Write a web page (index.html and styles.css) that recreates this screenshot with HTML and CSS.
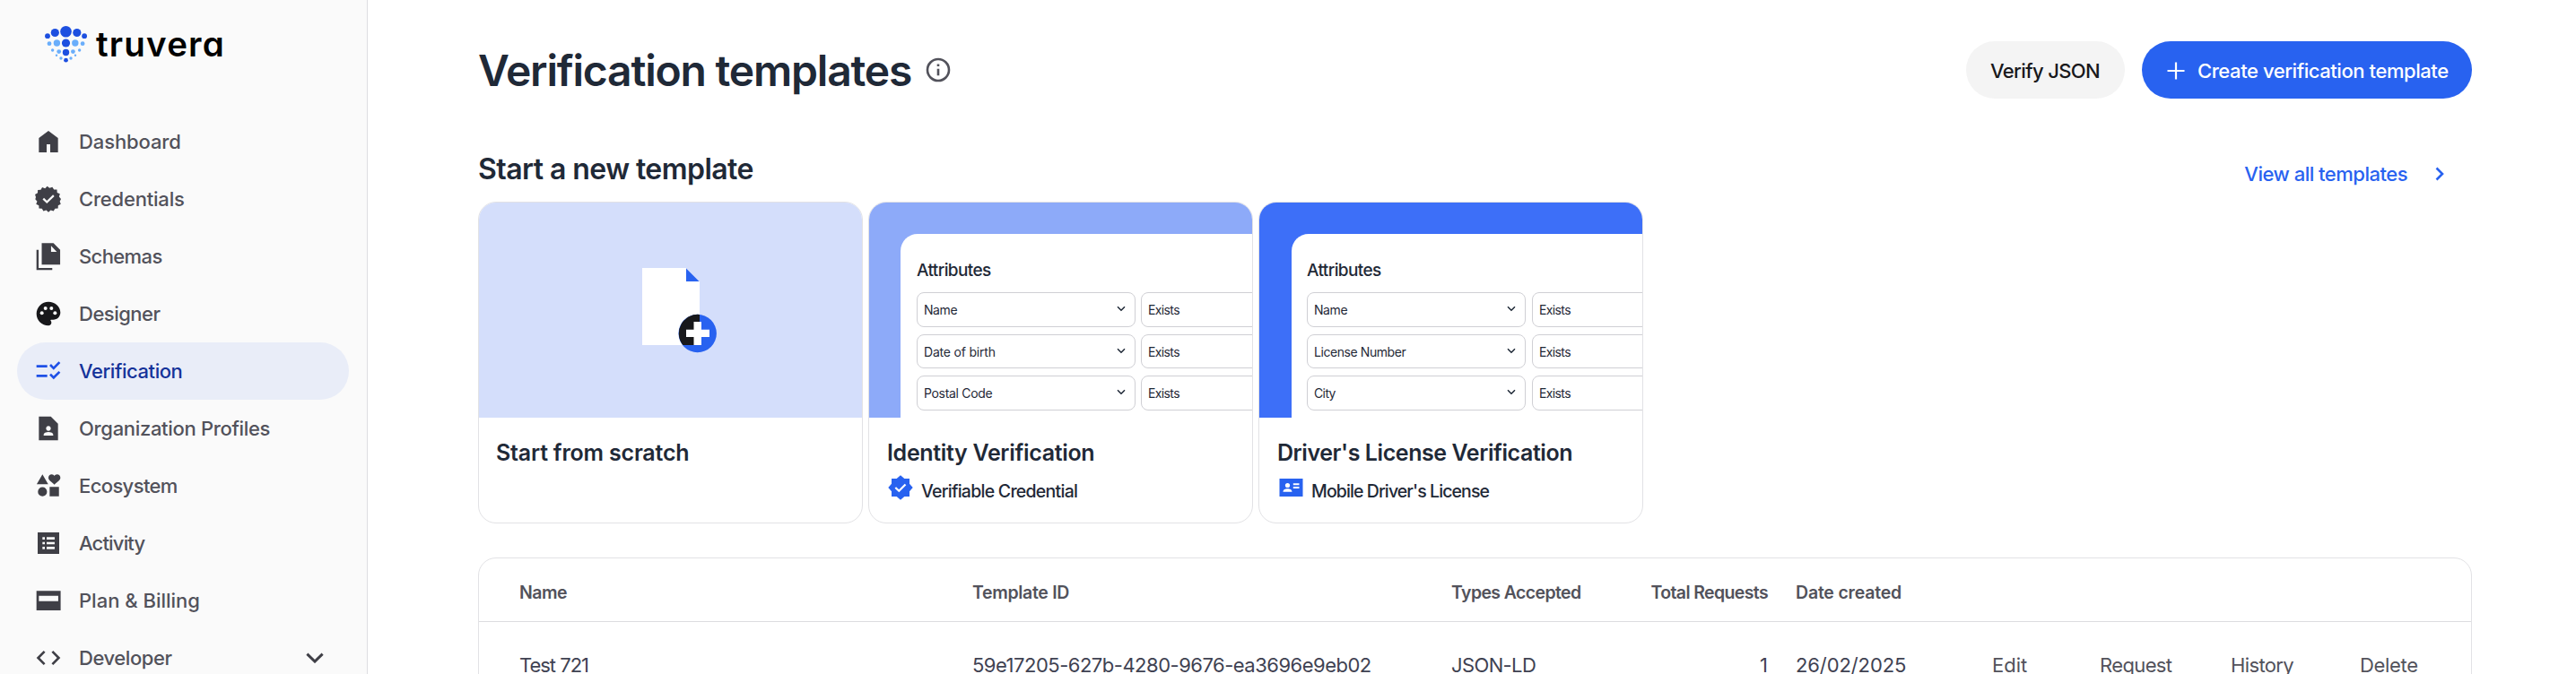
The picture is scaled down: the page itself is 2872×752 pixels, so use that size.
FILE: index.html
```html
<!DOCTYPE html>
<html lang="en">
<head>
<meta charset="utf-8">
<title>Verification templates</title>
<link rel="stylesheet" href="styles.css">
</head>
<body>
<aside class="sidebar">
  <div class="logo">
    <svg width="48" height="44" viewBox="50 28 48 44">
      <g fill="#1d4fe0"><circle cx="73.5" cy="35.3" r="6.3"/><circle cx="61.3" cy="36.5" r="4.6"/><circle cx="85.8" cy="36.5" r="4.6"/><circle cx="53" cy="40.2" r="2.9"/><circle cx="94.1" cy="40.2" r="2.9"/><circle cx="73.5" cy="48" r="4.6"/><circle cx="73.5" cy="58.5" r="3.7"/><circle cx="73.5" cy="67.2" r="2.4"/></g>
      <g fill="#6aaefb"><circle cx="63.4" cy="48" r="3.7"/><circle cx="83.8" cy="48" r="3.7"/><circle cx="55" cy="48.7" r="2.4"/><circle cx="92.1" cy="48.7" r="2.4"/><circle cx="65.7" cy="57.6" r="2.4"/><circle cx="81.4" cy="57.6" r="2.4"/><circle cx="58.6" cy="56" r="1.7"/><circle cx="88.6" cy="56" r="1.7"/><circle cx="63" cy="61.7" r="1.2"/><circle cx="84" cy="61.7" r="1.2"/><circle cx="68" cy="65" r="1.7"/><circle cx="79" cy="65" r="1.7"/></g>
    </svg>
    <span class="wordmark">truvera</span>
  </div>
  <nav class="nav">
    <a class="item"><svg class="ic" viewBox="0 0 24 24"><path d="M4 21V9l8-6 8 6v12h-6.5v-6.8h-3V21z"/></svg><span class="ls1">Dashboard</span></a>
    <a class="item"><svg class="ic" viewBox="0 0 24 24"><path d="M22.5 12l-1.6-1.9.7-2.4-2.3-1 -.2-2.5-2.5 0-1.3-2.2-2.4.9L11 1.4 9.2 3.100l-2.400-.9-1.200 2.200-2.500.1-.1 2.500-2.200 1.200.7 2.300L1 12.100l1.600 1.900-.9 2.300 2.300 1.100.1 2.500 2.500.1 1.200 2.200 2.400-.8 1.800 1.700 1.900-1.700 2.400.8 1.200-2.200 2.500-.1.100-2.500 2.200-1.100-.8-2.300z"/><path class="cut" d="M7.700 11.700l3 2.900 5.700-5.500"/></svg><span class="ls2">Credentials</span></a>
    <a class="item"><svg class="ic" viewBox="0 0 24 24"><path fill-rule="evenodd" d="M16.200 1H6.400v17.900h15.400V6.600zM14.200 3.200v5h4.800z"/><path d="M2 6.500v17h13.200v-1.800H3.800V6.500z"/></svg><span class="ls6">Schemas</span></a>
    <a class="item"><svg class="ic ink" viewBox="0 0 24 24"><path fill-rule="evenodd" d="M12 2C6.490 2 2 6.490 2 12s4.490 10 10 10c1.380 0 2.500-1.120 2.500-2.500 0-.61-.23-1.200-.64-1.670-.08-.1-.13-.21-.13-.33 0-.28.22-.5.5-.5H16c3.310 0 6-2.690 6-6C22 6.040 17.510 2 12 2z"/><g fill="#fafafa"><circle cx="6.500" cy="11.500" r="1.500"/><circle cx="9.500" cy="7.500" r="1.500"/><circle cx="14.500" cy="7.500" r="1.500"/><circle cx="17.500" cy="11.500" r="1.500"/></g></svg><span class="ls5">Designer</span></a>
    <a class="item active"><svg class="ic" viewBox="0 0 24 24"><path d="M11 7H2v2h9V7zm0 8H2v2h9v-2zm5.340-4L12.800 7.460l1.410-1.410 2.120 2.120 4.240-4.240L22 5.340 16.340 11zm0 8l-3.540-3.540 1.410-1.410 2.120 2.120 4.240-4.240L22 13.340 16.340 19z"/></svg><span class="ls4">Verification</span></a>
    <a class="item"><svg class="ic" viewBox="0 0 24 24"><path d="M14 2H4v20h16V8l-6-6zm-2 8c1.100 0 2 .9 2 2s-.9 2-2 2-2-.9-2-2 .9-2 2-2zm4 8H8v-.57c0-.81.48-1.530 1.220-1.850.85-.37 1.790-.58 2.780-.58s1.930.21 2.780.58c.74.32 1.220 1.040 1.220 1.850V18z"/></svg><span class="ls3">Organization Profiles</span></a>
    <a class="item"><svg class="ic" viewBox="0 0 24 24"><path d="M7 13.200a3.800 3.800 0 1 0 0 7.600 3.800 3.800 0 0 0 0-7.600zM13 13v7.800h7.800V13zM7 2.500l-4.800 8.200h9.600zM19.250 2.500c-1.060 0-1.810.56-2.250 1.170-.44-.61-1.190-1.170-2.250-1.170C13.190 2.500 12 3.780 12 5.250c0 2 2.420 3.420 5 5.750 2.580-2.330 5-3.750 5-5.750 0-1.470-1.190-2.750-2.750-2.750z"/></svg><span class="ls6">Ecosystem</span></a>
    <a class="item"><svg class="ic" viewBox="0 0 24 24"><path fill-rule="evenodd" d="M3 3h18v18H3zM7 7v2h2V7zM10.500 7v2h6.700V7zM7 11v2h2v-2zM10.500 11v2h6.700v-2zM7 15v2h2v-2zM10.500 15v2h6.700v-2z"/></svg><span class="ls8">Activity</span></a>
    <a class="item"><svg class="ic" viewBox="0 0 24 24"><path fill-rule="evenodd" d="M2 3.900h20.200v16.300H2zM4 8v4.600h16.200V8z"/></svg><span>Plan &amp; Billing</span></a>
    <a class="item"><svg class="ic" viewBox="0 0 24 24"><path d="M9.400 16.600L4.800 12l4.600-4.600L8 6l-6 6 6 6 1.400-1.400zm5.200 0l4.600-4.600-4.600-4.600L16 6l6 6-6 6-1.400-1.400z"/></svg><span class="ls4">Developer</span><svg class="expand" width="20" height="12" viewBox="0 0 20 12"><path d="M1.400 1.600L10 10l8.600-8.400"/></svg></a>
  </nav>
</aside>

<main class="main">
  <header class="head">
    <h1>Verification templates</h1>
    <svg class="info" width="32" height="32" viewBox="0 0 32 32"><circle cx="16" cy="16" r="12"/><path d="M16 14.800v7.400M16 9.600v2.400"/></svg>
    <div class="actions">
      <button class="btn ghost"><span class="ls6">Verify JSON</span></button>
      <button class="btn primary"><svg width="20" height="20" viewBox="0 0 20 20"><path d="M10 .5v19M.5 10h19"/></svg><span class="ls4">Create verification template</span></button>
    </div>
  </header>

  <section class="start">
    <div class="start-head">
      <h2>Start a new template</h2>
      <a class="all"><span class="ls5">View all templates</span><svg width="12" height="16" viewBox="0 0 12 16"><path d="M2.500 1.500L9 8l-6.500 6.500"/></svg></a>
    </div>
    <div class="cards">
      <article class="card">
        <div class="art scratch">
          <svg width="84" height="96" viewBox="0 0 84 96">
            <path fill="#fff" d="M0 0h49v15h15v71H0z"/><path fill="#2862f0" d="M49 .5v14.500h14.500z"/>
            <circle cx="61.700" cy="73" r="21.200" fill="#2862f0"/><path fill="#18181b" d="M64 51.900A21.200 21.200 0 0 0 45.300 86H64z"/>
            <path fill="#fff" d="M57.500 60h8.500v8.700h9v8.300h-9v9h-8.500v-9H49v-8.300h8.500z"/>
          </svg>
        </div>
        <div class="info-box"><h3 class="ls2">Start from scratch</h3></div>
      </article>
      <article class="card">
        <div class="art light">
          <div class="panel">
            <div class="ptitle">Attributes</div>
            <div class="prow"><div class="sel"><span class="ls4">Name</span><svg width="10" height="7" viewBox="0 0 10 7"><path d="M1 1.200l4 4 4-4"/></svg></div><div class="sel"><span class="ls6">Exists</span></div></div>
            <div class="prow"><div class="sel"><span class="ls2">Date of birth</span><svg width="10" height="7" viewBox="0 0 10 7"><path d="M1 1.200l4 4 4-4"/></svg></div><div class="sel"><span class="ls6">Exists</span></div></div>
            <div class="prow"><div class="sel"><span class="ls3">Postal Code</span><svg width="10" height="7" viewBox="0 0 10 7"><path d="M1 1.200l4 4 4-4"/></svg></div><div class="sel"><span class="ls6">Exists</span></div></div>
          </div>
        </div>
        <div class="info-box shifted"><h3 class="ls3">Identity Verification</h3>
          <div class="kind"><svg width="28" height="28" viewBox="0 0 28 28"><path fill="#2862f0" d="M4 4h5.700L14 .3 18.300 4H24v5.700l3.700 4.300-3.700 4.300V24h-5.700L14 27.700 9.700 24H4v-5.700L.3 14 4 9.700z"/><path fill="none" stroke="#fff" stroke-width="2.200" d="M8.300 14l4 3.800 7.200-7.300"/></svg><span class="ls7">Verifiable Credential</span></div>
        </div>
      </article>
      <article class="card">
        <div class="art deep">
          <div class="panel">
            <div class="ptitle">Attributes</div>
            <div class="prow"><div class="sel"><span class="ls4">Name</span><svg width="10" height="7" viewBox="0 0 10 7"><path d="M1 1.200l4 4 4-4"/></svg></div><div class="sel"><span class="ls6">Exists</span></div></div>
            <div class="prow"><div class="sel"><span class="ls4">License Number</span><svg width="10" height="7" viewBox="0 0 10 7"><path d="M1 1.200l4 4 4-4"/></svg></div><div class="sel"><span class="ls6">Exists</span></div></div>
            <div class="prow"><div class="sel"><span class="ls6">City</span><svg width="10" height="7" viewBox="0 0 10 7"><path d="M1 1.200l4 4 4-4"/></svg></div><div class="sel"><span class="ls6">Exists</span></div></div>
          </div>
        </div>
        <div class="info-box shifted"><h3 class="ls4">Driver's License Verification</h3>
          <div class="kind"><svg width="28" height="28" viewBox="0 0 28 28"><path fill="#2862f0" d="M1.500 4h26v20h-26z"/><g fill="#fff"><circle cx="10.500" cy="11.500" r="2.600"/><path d="M5.500 18.800c0-2.500 2.500-3.500 5-3.500s5 1 5 3.500zM16.800 9.200h6.700v2h-6.700zM16.800 13h6.700v2h-6.700z"/></g></svg><span class="ls9">Mobile Driver's License</span></div>
        </div>
      </article>
    </div>
  </section>

  <div class="table">
    <div class="row thead">
      <span class="ls5">Name</span><span class="ls3">Template ID</span><span class="ls6">Types Accepted</span><span class="num ls6">Total Requests</span><span class="date ls2">Date created</span>
    </div>
    <div class="row">
      <span class="ls10">Test 721</span><span class="ls5">59e17205-627b-4280-9676-ea3696e9eb02</span><span class="ls6">JSON-LD</span><span class="num">1</span><span class="date ls1">26/02/2025</span><a>Edit</a><a class="ls6">Request</a><a class="ls6">History</a><a class="ls3">Delete</a>
    </div>
  </div>
</main>
</body>
</html>
```
FILE: styles.css
```css
* { box-sizing: border-box; }
body {
  margin: 0;
  height: 752px;
  display: flex;
  overflow: hidden;
  background: #fff;
  color: #1f2937;
  font-family: Inter, "Liberation Sans", sans-serif;
}
svg { flex: none; display: block; }
h1, h2, h3 { margin: 0; font-weight: 600; white-space: nowrap; }

/* letter-spacing steps */
.ls1 { letter-spacing: -0.1px; }
.ls2 { letter-spacing: -0.2px; }
.ls3 { letter-spacing: -0.32px; }
.ls4 { letter-spacing: -0.43px; }
.ls5 { letter-spacing: -0.5px; }
.ls6 { letter-spacing: -0.62px; }
.ls7 { letter-spacing: -0.74px; }
.ls8 { letter-spacing: -0.83px; }
.ls9 { letter-spacing: -0.9px; }
.ls10 { letter-spacing: -1.02px; }

/* sidebar */
.sidebar {
  flex: none;
  width: 410px;
  height: 752px;
  background: #fafafa;
  border-right: 1px solid #dedee1;
  overflow: hidden;
}
.logo {
  height: 126px;
  padding: 28px 0 0 50px;
  display: flex;
  align-items: flex-start;
  gap: 9px;
}
.wordmark {
  color: #000;
  font-size: 38.500px;
  line-height: 42px;
  font-weight: 600;
  letter-spacing: 1.200px;
  font-feature-settings: "cv11";
}
.nav { padding: 0 20px 0 19px; }
.item {
  height: 64px;
  padding-left: 19px;
  display: flex;
  align-items: center;
  border-radius: 32px;
  color: #52525b;
  font-size: 22px;
  font-weight: 500;
}
.item .ic { width: 32px; height: 32px; margin-right: 18px; fill: #3f3f46; }
.item .ic.ink { fill: #18181b; }
.item .cut { fill: none; stroke: #fafafa; stroke-width: 1.700; }
.item.active { background: #e9edf8; color: #15339a; }
.item.active .ic { fill: #1f50e6; }
.expand { margin: 0 28px 0 auto; fill: none; stroke: #3f3f46; stroke-width: 3; }

/* main */
.main { flex: 1; height: 752px; padding: 46px 116px 0 123px; min-width: 0; overflow: hidden; }
.head { height: 64px; display: flex; align-items: center; }
h1 { font-size: 48px; letter-spacing: -1.21px; }
.info { margin-left: 14px; fill: none; stroke: #52525b; stroke-width: 2.600; }
.actions { margin-left: auto; display: flex; gap: 19px; }
.btn {
  height: 64px;
  padding: 2px 27px 0 28px;
  border: 0;
  border-radius: 32px;
  display: flex;
  align-items: center;
  font: 500 22px Inter, sans-serif;
  white-space: nowrap;
}
.ghost { width: 177px; background: #f4f4f4; color: #18181b; padding-left: 27px; }
.primary { width: 368px; gap: 14px; background: #2862f0; color: #fff; }
.primary svg { fill: none; stroke: #fff; stroke-width: 2.200; }

.start-head {
  height: 40px;
  margin: 58px 0 17px;
  padding-right: 30px;
  display: flex;
  justify-content: space-between;
  align-items: center;
}
h2 { padding-top: 2px; font-size: 32px; line-height: 40px; letter-spacing: -0.56px; }
.all {
  margin-top: 12px;
  display: flex;
  align-items: center;
  gap: 30px;
  color: #2862f0;
  font-size: 22px;
  font-weight: 500;
}
.all svg { fill: none; stroke: #2862f0; stroke-width: 2.600; }

.cards { display: flex; gap: 6px; }
.card {
  width: 429px;
  height: 359px;
  border: 1px solid #e2e2e5;
  border-radius: 20px;
  overflow: hidden;
}
.art { height: 240px; overflow: hidden; }
.scratch { background: #d4defb; padding: 73px 0 0 182px; }
.light { background: #8daaf9; padding: 35px 0 0 35px; }
.deep { background: #3d6ff8; padding: 35px 0 0 36px; }
.panel {
  height: 205px;
  padding: 29px 0 0 18px;
  background: #fff;
  border-top-left-radius: 19px;
  overflow: hidden;
}
.deep .panel { padding-left: 17px; }
.ptitle {
  margin-bottom: 12px;
  font-size: 19px;
  line-height: 24px;
  font-weight: 500;
  letter-spacing: -0.6px;
}
.prow { display: flex; gap: 6px; margin-bottom: 8px; }
.deep .prow { gap: 7px; }
.sel {
  flex: none;
  width: 244px;
  height: 38.700px;
  padding: 0 10px 0 7px;
  display: flex;
  align-items: center;
  justify-content: space-between;
  border: 1px solid #cfcfd4;
  border-radius: 8px;
  font-size: 14px;
}
.sel svg { margin-top: -2px; fill: none; stroke: #1f2937; stroke-width: 1.500; }
.info-box { padding: 24px 19px 0; }
.info-box.shifted { padding-left: 20px; }
h3 { font-size: 25px; line-height: 30px; }
.kind {
  height: 32px;
  margin: 8px 0 0 1px;
  display: flex;
  align-items: center;
  gap: 9px;
  font-size: 19.500px;
  font-weight: 500;
}
.kind span { padding-top: 8px; }

/* table */
.table {
  margin-top: 38px;
  height: 300px;
  border: 1px solid #e2e2e5;
  border-radius: 20px 20px 0 0;
}
.row {
  height: 96px;
  padding-left: 45px;
  display: grid;
  grid-template-columns: 505px 534px 160px 195px 248px 120px 146px 144px 1fr;
  align-items: center;
  color: #3f4252;
  font-size: 22px;
}
.row > * { white-space: nowrap; }
.row a { color: #52525b; }
.thead {
  height: 71px;
  padding-top: 6px;
  border-bottom: 1px solid #dcdcdf;
  font-size: 19.500px;
  font-weight: 600;
}
.thead span { color: #52525b; }
.num { text-align: right; padding-right: 2px; }
.date { padding-left: 29px; }
```
